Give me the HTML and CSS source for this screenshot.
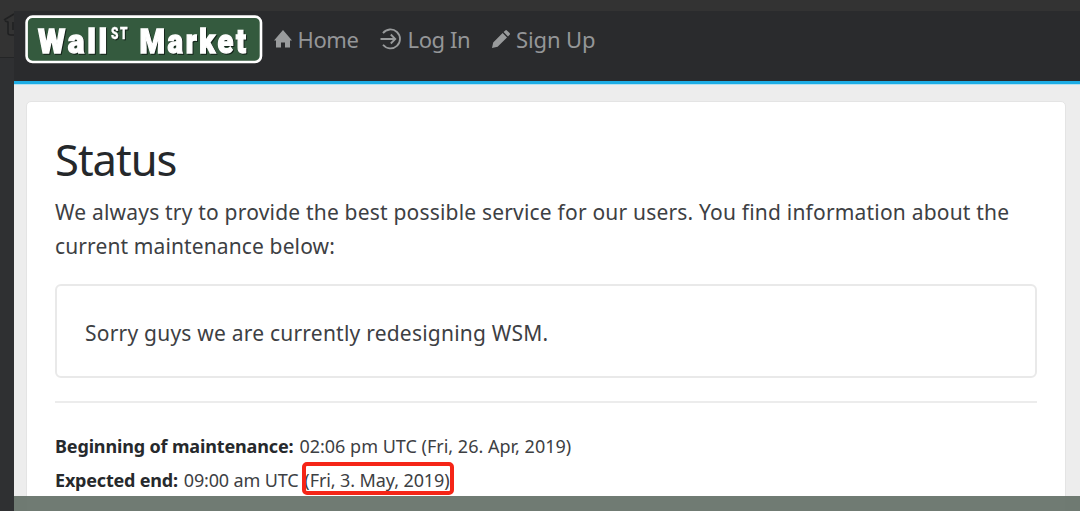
FILE: index.html
```
<!DOCTYPE html>
<html lang="en">
<head>
<meta charset="utf-8">
<title>Wall St Market</title>
<link rel="stylesheet" href="styles.css">
</head>
<body>
<div class="frame">
  <aside class="rail">
    <div class="rail-top">
      <svg class="rail-icon" viewBox="0 0 14 26"><path d="M4 7 14 1M5 8l3 1v11q0 2 3 2h3M13 9v8" fill="none" stroke="#202122" stroke-width="1.6"/></svg>
    </div>
  </aside>
  <div class="window">
    <header class="navbar">
      <a class="logo">
        <svg width="238" height="49" viewBox="0 0 238 49">
          <rect x="1.6" y="1.6" width="234.4" height="45.4" rx="6" fill="#345a3e" stroke="#fff" stroke-width="2.6"/>
          <g class="logo-text">
            <text x="13" y="37.5" textLength="72" lengthAdjust="spacingAndGlyphs">Wall</text>
            <text class="sup" x="86" y="23.5" textLength="18" lengthAdjust="spacingAndGlyphs">ST</text>
            <text x="114.5" y="37.5" textLength="109" lengthAdjust="spacingAndGlyphs">Market</text>
          </g>
        </svg>
      </a>
      <nav class="links">
        <a class="link home"><svg width="18" height="18" viewBox="0 0 18 18"><path d="M9 0 18 10.5h-2V17.5h-5v-5H7v5H2v-7H0z" fill="#999b9c"/></svg><span>Home</span></a>
        <a class="link login"><svg width="22" height="22" viewBox="0 0 22 22"><path d="M3 5.1A9.5 9.5 0 1 1 3 16.8M.5 11H15M10.8 6.5 15.3 11l-4.5 4.5" fill="none" stroke="#999b9c" stroke-width="1.8"/></svg><span>Log In</span></a>
        <a class="link signup"><svg width="18" height="18" viewBox="0 0 18 18"><path d="M0 18 1.2 12.4 10.6 3 15 7.4 5.6 16.8zM11.6 2 13.3.4q.8-.7 1.6 0l2.700 2.700q.8.8 0 1.600L16 6.400z" fill="#999b9c"/></svg><span>Sign Up</span></a>
      </nav>
    </header>
    <main class="content">
      <section class="card">
        <h1>Status</h1>
        <p class="lead"><span class="l1">We always try to provide the best possible service for our users. You find information about the</span><br><span class="l2">current maintenance below:</span></p>
        <div class="notice"><span>Sorry guys we are currently redesigning WSM.</span></div>
        <hr>
        <div class="times">
          <div class="row"><b class="b1">Beginning of maintenance:</b><span class="t1">02:06 pm UTC (Fri, 26. Apr, 2019)</span></div>
          <div class="row"><b class="b2">Expected end:</b><span class="t2">09:00 am UTC</span><span class="marked"><span class="t3">(Fri, 3. May, 2019)</span></span></div>
        </div>
      </section>
    </main>
    <footer class="bottom"></footer>
  </div>
</div>
</body>
</html>
```
FILE: styles.css
```
*, *::after { box-sizing: border-box; }
body {
  margin: 0;
  background: #333;
  font-family: "Noto Sans", "Open Sans", sans-serif;
  color: #3d4043;
}
.frame { display: flex; height: 511px; overflow: hidden; }
.rail { width: 14px; flex: none; background: #2f3032; }
.rail-top { height: 58px; padding-top: 13px; background: #333; border-bottom: 1px solid #242526; }
.rail-icon { display: block; width: 14px; height: 26px; }
.window {
  position: relative;
  flex: 1;
  display: flex;
  flex-direction: column;
  border-top: 11px solid #333;
  background: #ededed;
}
.navbar {
  display: flex;
  flex: none;
  height: 73px;
  padding: 4px 0 0 11px;
  background: #2a2b2d;
  border-bottom: 3px solid #1dade5;
}
.logo, .logo svg { display: block; }
.logo svg { overflow: visible; }
.logo text { font-family: Roboto, sans-serif; font-weight: 900; font-size: 34px; letter-spacing: 3px; }
.logo .sup { font-size: 16px; letter-spacing: 2px; stroke-width: .3; }
.logo-text { fill: #fff; stroke: #fff; stroke-width: 1.3; filter: drop-shadow(1.500px 1.500px .5px #14241a); }
.links { display: flex; height: 50px; padding-left: 11px; color: #949698; font-size: 22px; letter-spacing: -.4px; }
.link { display: flex; align-items: center; height: 47px; white-space: nowrap; }
.link svg { flex: none; }
.home { width: 106px; gap: 5.500px; }
.login { width: 112px; gap: 5.500px; }
.signup { gap: 6px; letter-spacing: -.1px; }
.content { flex: 1; display: flex; padding: 16px 14px 0 12px; border-top: 1px solid #b5e2f2; }
.card {
  flex: 1;
  height: 440px;
  padding: 30px 28px 0;
  background: #fff;
  border: 1.5px solid #e4e4e4;
  border-radius: 5px;
}
h1 { margin: 0; font-size: 43.500px; line-height: 54px; font-weight: 400; letter-spacing: -1px; color: #25282b; }
.lead { margin: 9px 0 0; font-size: 21px; line-height: 34px; white-space: nowrap; }
.l1 { letter-spacing: .195px; }
.l2 { letter-spacing: .12px; }
.notice {
  display: flex;
  align-items: center;
  height: 94px;
  margin-top: 21px;
  padding: 4px 28px 0;
  border: 2px solid #e9e9e9;
  border-radius: 6px;
  font-size: 21px;
  letter-spacing: .22px;
}
hr { height: 2px; margin: 23px 0 26px; border: 0; background: #ececec; }
.times { font-size: 18px; line-height: 34px; white-space: nowrap; }
.row { display: flex; height: 34px; }
.row b { color: #26292c; margin-right: 6px; }
.b1 { letter-spacing: -.15px; }
.b2 { letter-spacing: -.2px; }
.t2 { letter-spacing: -.16px; margin-right: 6px; }
.t3 { letter-spacing: -.1px; }
.marked { position: relative; }
.marked::after {
  content: "";
  position: absolute;
  left: -2px;
  top: -1px;
  width: 152px;
  height: 33px;
  border: 4px solid #f52517;
  border-radius: 5px;
}
.bottom { position: absolute; left: 0; right: 0; bottom: 0; height: 15.500px; background: rgba(104, 116, 107, .95); }
```
